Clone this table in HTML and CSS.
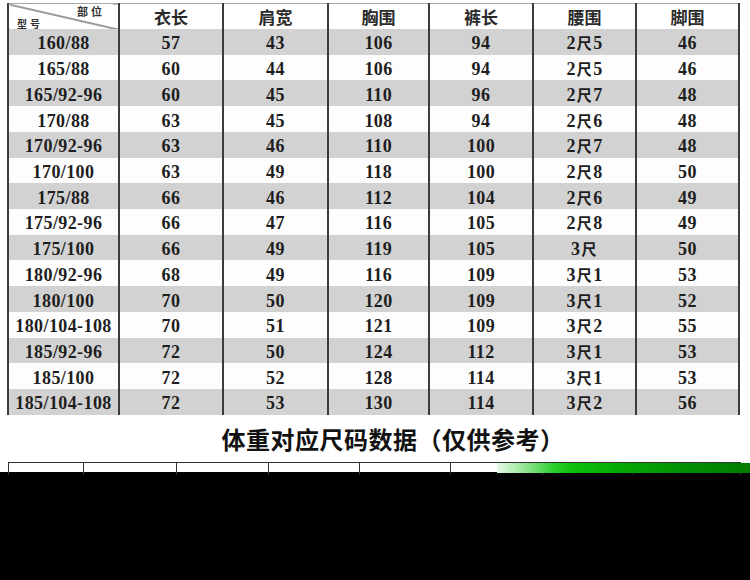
FILE: index.html
```html
<!DOCTYPE html>
<html lang="zh">
<head>
<meta charset="utf-8">
<link rel="stylesheet" href="styles.css">
</head>
<body>
<div class="page">
  <table class="size-table">
    <colgroup>
      <col class="c1"><col class="c2"><col class="c3"><col class="c4"><col class="c5"><col class="c6"><col class="c7">
    </colgroup>
    <thead>
      <tr>
        <th class="corner"><div class="corner-in"><span class="part">部位</span><span class="model">型号</span></div></th>
        <th>衣长</th><th>肩宽</th><th>胸围</th><th>裤长</th><th>腰围</th><th>脚围</th>
      </tr>
    </thead>
    <tbody>
      <tr><td>160/88</td><td>57</td><td>43</td><td>106</td><td>94</td><td>2<span class="chi">尺</span>5</td><td>46</td></tr>
      <tr><td>165/88</td><td>60</td><td>44</td><td>106</td><td>94</td><td>2<span class="chi">尺</span>5</td><td>46</td></tr>
      <tr><td>165/92-96</td><td>60</td><td>45</td><td>110</td><td>96</td><td>2<span class="chi">尺</span>7</td><td>48</td></tr>
      <tr><td>170/88</td><td>63</td><td>45</td><td>108</td><td>94</td><td>2<span class="chi">尺</span>6</td><td>48</td></tr>
      <tr><td>170/92-96</td><td>63</td><td>46</td><td>110</td><td>100</td><td>2<span class="chi">尺</span>7</td><td>48</td></tr>
      <tr><td>170/100</td><td>63</td><td>49</td><td>118</td><td>100</td><td>2<span class="chi">尺</span>8</td><td>50</td></tr>
      <tr><td>175/88</td><td>66</td><td>46</td><td>112</td><td>104</td><td>2<span class="chi">尺</span>6</td><td>49</td></tr>
      <tr><td>175/92-96</td><td>66</td><td>47</td><td>116</td><td>105</td><td>2<span class="chi">尺</span>8</td><td>49</td></tr>
      <tr><td>175/100</td><td>66</td><td>49</td><td>119</td><td>105</td><td>3<span class="chi">尺</span></td><td>50</td></tr>
      <tr><td>180/92-96</td><td>68</td><td>49</td><td>116</td><td>109</td><td>3<span class="chi">尺</span>1</td><td>53</td></tr>
      <tr><td>180/100</td><td>70</td><td>50</td><td>120</td><td>109</td><td>3<span class="chi">尺</span>1</td><td>52</td></tr>
      <tr><td>180/104-108</td><td>70</td><td>51</td><td>121</td><td>109</td><td>3<span class="chi">尺</span>2</td><td>55</td></tr>
      <tr><td>185/92-96</td><td>72</td><td>50</td><td>124</td><td>112</td><td>3<span class="chi">尺</span>1</td><td>53</td></tr>
      <tr><td>185/100</td><td>72</td><td>52</td><td>128</td><td>114</td><td>3<span class="chi">尺</span>1</td><td>53</td></tr>
      <tr><td>185/104-108</td><td>72</td><td>53</td><td>130</td><td>114</td><td>3<span class="chi">尺</span>2</td><td>56</td></tr>
    </tbody>
  </table>

  <h2 class="title">体重对应尺码数据（仅供参考）</h2>

  <div class="weight-wrap">
    <table class="weight-table">
      <colgroup>
        <col class="w1"><col class="w2"><col class="w3"><col class="w4"><col class="w5"><col class="w6"><col class="w7"><col class="w8">
      </colgroup>
      <tr><td></td><td></td><td></td><td></td><td></td><td></td><td></td><td></td></tr>
    </table>
    <div class="green-strip"></div>
  </div>
  <div class="blackout"></div>
</div>
</body>
</html>
```
FILE: styles.css
```css
html, body {
  margin: 0;
  padding: 0;
  background: #fff;
}

.page {
  width: 750px;
  height: 580px;
  overflow: hidden;
  padding-top: 3px;
  box-sizing: border-box;
}

.size-table {
  margin-left: 7px;
  width: 731px;
  border-collapse: collapse;
  table-layout: fixed;
  font-family: "Liberation Serif", "Noto Sans CJK SC", serif;
  font-weight: bold;
  color: #1e1e1e;
  border-top: 1px solid #a8a8a8;
  border-left: 1px solid #c4c4c4;
  border-right: 2px solid #7a7a7a;
}

.c1 { width: 111px; }
.c2 { width: 104px; }
.c3 { width: 105px; }
.c4 { width: 101px; }
.c5 { width: 104px; }
.c6 { width: 103px; }
.c7 { width: 103px; }

.size-table th,
.size-table td {
  border-left: 2px solid #3c3c3c;
  border-right: 2px solid #3c3c3c;
  text-align: center;
  padding: 0;
  white-space: nowrap;
}

.size-table th {
  height: 25px;
  font-family: "Noto Sans CJK SC", sans-serif;
  font-size: 17px;
  font-weight: bold;
  color: #2a2a2a;
  background: #fff;
  line-height: 20px;
}

.size-table td {
  height: 25.72px;
  font-size: 18px;
  line-height: 20px;
  letter-spacing: 0.4px;
  padding-top: 3px;
  box-sizing: border-box;
}

.size-table tbody tr:nth-child(odd) td {
  background: #d2d2d2;
}

.size-table tbody tr:nth-child(even) td {
  background: #fdfdfd;
}

.chi {
  font-family: "Noto Sans CJK SC", sans-serif;
  font-size: 15px;
  font-weight: bold;
  padding: 0 1px;
}

.corner {
  background: linear-gradient(to top right, transparent calc(50% - 1px), #3a3a3a 50%, transparent calc(50% + 1px)) !important;
}

.corner-in {
  display: flex;
  flex-direction: column;
  height: 25px;
  font-size: 10px;
  line-height: 10px;
  color: #333;
}

.part {
  align-self: flex-end;
  margin-right: 13px;
  margin-top: 2px;
  font-size: 11px;
  letter-spacing: 3px;
}

.model {
  align-self: flex-start;
  margin-left: 8px;
  margin-top: 3px;
  letter-spacing: 3px;
}

.title {
  margin: 9px 0 0 0;
  padding-left: 36px;
  height: 38px;
  text-align: center;
  font-family: "Noto Sans CJK SC", sans-serif;
  font-size: 24px;
  line-height: 30px;
  letter-spacing: 0.5px;
  font-weight: bold;
  color: #111;
}

.weight-wrap {
  position: relative;
  height: 10px;
}

.weight-table {
  margin-left: 8px;
  width: 733px;
  border-collapse: collapse;
  table-layout: fixed;
  border-top: 1px solid #333;
  border-left: 1px solid #333;
  border-right: 1px solid #333;
}

.w1 { width: 75px; }
.w2 { width: 93px; }
.w3 { width: 92px; }
.w4 { width: 91px; }
.w5 { width: 91px; }
.w6 { width: 92px; }
.w7 { width: 91px; }
.w8 { width: 107px; }

.weight-table td {
  height: 12px;
  padding: 0;
  border-left: 1px solid #333;
  border-right: 1px solid #333;
}

.green-strip {
  position: absolute;
  left: 497px;
  right: 0;
  top: 1px;
  height: 10px;
  background: linear-gradient(to right, #e6fae6 0%, #9be79b 10%, #2fcf2f 22%, #0cbf0c 30%, #05a805 50%, #028f02 75%, #007c00 100%);
}

.blackout {
  height: 120px;
  background: #000;
}
```
